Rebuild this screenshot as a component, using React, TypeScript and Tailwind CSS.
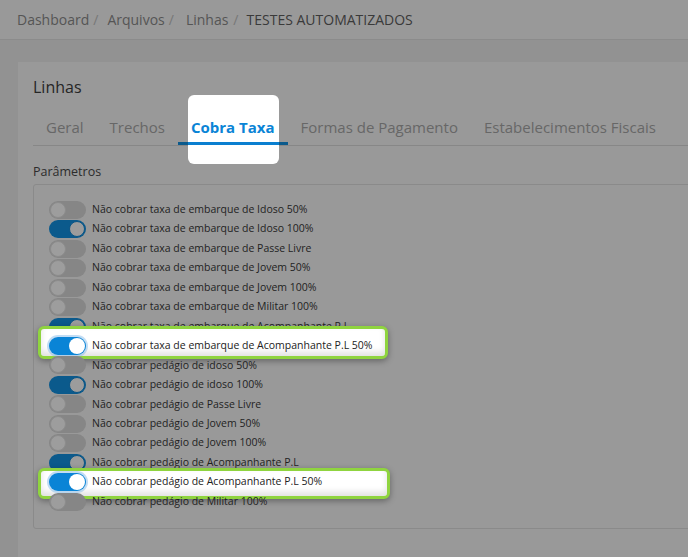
import React from "react";

type Param = { label: string; on: boolean; focus?: "top" | "bottom" };

const params: Param[] = [
  { label: "Não cobrar taxa de embarque de Idoso 50%", on: false },
  { label: "Não cobrar taxa de embarque de Idoso 100%", on: true },
  { label: "Não cobrar taxa de embarque de Passe Livre", on: false },
  { label: "Não cobrar taxa de embarque de Jovem 50%", on: false },
  { label: "Não cobrar taxa de embarque de Jovem 100%", on: false },
  { label: "Não cobrar taxa de embarque de Militar 100%", on: false },
  { label: "Não cobrar taxa de embarque de Acompanhante P.L", on: true },
  { label: "Não cobrar taxa de embarque de Acompanhante P.L 50%", on: true, focus: "top" },
  { label: "Não cobrar pedágio de idoso 50%", on: false },
  { label: "Não cobrar pedágio de idoso 100%", on: true },
  { label: "Não cobrar pedágio de Passe Livre", on: false },
  { label: "Não cobrar pedágio de Jovem 50%", on: false },
  { label: "Não cobrar pedágio de Jovem 100%", on: false },
  { label: "Não cobrar pedágio de Acompanhante P.L", on: true },
  { label: "Não cobrar pedágio de Acompanhante P.L 50%", on: true, focus: "bottom" },
  { label: "Não cobrar pedágio de Militar 100%", on: false },
];

const tabs = ["Geral", "Trechos", "Cobra Taxa", "Formas de Pagamento", "Estabelecimentos Fiscais"];

const Toggle: React.FC<{ on: boolean; lit?: boolean }> = ({ on, lit }) => {
  if (lit) {
    return (
      <div className="relative flex h-[18px] w-[37px] shrink-0 items-center justify-end rounded-full bg-[#0a84d6] pr-[1px] shadow-[0_0_0_2px_rgba(120,180,230,0.45)]">
        <div className="h-[16px] w-[16px] rounded-full bg-white" />
      </div>
    );
  }
  return (
    <div
      className={
        on
          ? "relative flex h-[18px] w-[37px] shrink-0 items-center justify-end rounded-full bg-[#0b5a8c] pr-[1px]"
          : "relative flex h-[18px] w-[37px] shrink-0 items-center justify-start rounded-full bg-[#868686] pl-[1px]"
      }
    >
      <div
        className={
          on
            ? "h-[16px] w-[16px] rounded-full border border-[#0b5585] bg-[#9c9c9c]"
            : "h-[16px] w-[16px] rounded-full border border-[#8c8c8c] bg-[#9d9d9d]"
        }
      />
    </div>
  );
};

const ParamRow: React.FC<{ p: Param }> = ({ p }) => {
  const lit = !!p.focus;
  return (
    <div className="relative flex h-[19.47px] items-center">
      {p.focus === "top" && (
        <div className="absolute left-[-11px] top-[-10px] h-[33px] w-[350px] rounded-[6px] border-[3px] border-[#8fd43f] bg-white shadow-[0_2px_6px_rgba(0,0,0,0.35),inset_0_-4px_6px_rgba(0,0,0,0.12)]" />
      )}
      {p.focus === "bottom" && (
        <div className="absolute left-[-11px] top-[-5px] h-[31px] w-[352px] rounded-[6px] border-[3px] border-[#8fd43f] bg-white shadow-[0_2px_6px_rgba(0,0,0,0.35),inset_0_-4px_6px_rgba(0,0,0,0.12)]" />
      )}
      <Toggle on={p.on} lit={lit} />
      <span className={lit ? "relative ml-[6px] text-[10.5px] text-[#222]" : "relative ml-[6px] text-[10.5px] text-[#1f1f1f]"}>
        {p.label}
      </span>
    </div>
  );
};

export default function App() {
  return (
    <div className="h-[557px] w-[688px] overflow-hidden bg-[#929292] font-['Open_Sans',sans-serif]">
      {/* breadcrumb bar */}
      <div className="flex h-[40px] items-center border-b border-[#8b8b8b] bg-[#999999] pl-[17px] text-[14px]">
        <span className="text-[#555]">Dashboard</span>
        <span className="ml-[4px] mr-[9px] text-[#777]">/</span>
        <span className="text-[#555]">Arquivos</span>
        <span className="ml-[4px] mr-[12px] text-[#777]">/</span>
        <span className="text-[#555]">Linhas</span>
        <span className="ml-[5px] mr-[8px] text-[#777]">/</span>
        <span className="text-[#3a3a3a]">TESTES AUTOMATIZADOS</span>
      </div>

      <div className="pl-[18px] pt-[22px]">
        <div className="w-[720px] bg-[#999999] pb-[40px] pl-[15px] pt-[14px]">
          <h2 className="text-[16px] leading-[22px] text-[#262626]">Linhas</h2>

          {/* tabs */}
          <div className="mt-[11px] flex border-b border-[#878787]">
            {tabs.map((t) =>
              t === "Cobra Taxa" ? (
                <div key={t} className="relative flex flex-col">
                  <div className="absolute left-[10px] right-[9px] top-[-14px] h-[69px] rounded-[6px] bg-white" />
                  <span className="relative px-[13px] pt-[8px] text-[15px] font-bold leading-[20px] text-[#0a84d6]">{t}</span>
                  <div className="relative mt-[5px] flex h-[3px]">
                    <div className="w-[10px] bg-[#0b5a8c]" />
                    <div className="flex-1 bg-[#0a7fd0]" />
                    <div className="w-[9px] bg-[#0b5a8c]" />
                  </div>
                </div>
              ) : (
                <div key={t} className="flex flex-col">
                  <span className="px-[13px] pt-[8px] text-[15px] leading-[20px] text-[#676767]">{t}</span>
                  <div className="mt-[5px] h-[3px]" />
                </div>
              )
            )}
          </div>

          <div className="mt-[17px] text-[12.5px] leading-[18px] text-[#2c2c2c]">Parâmetros</div>

          {/* parameter switches */}
          <div className="mt-[3px] rounded-[3px] border border-[#8a8a8a] pb-[16px] pl-[15px] pt-[15px]">
            {params.map((p) => (
              <ParamRow key={p.label} p={p} />
            ))}
          </div>
        </div>
      </div>
    </div>
  );
}
